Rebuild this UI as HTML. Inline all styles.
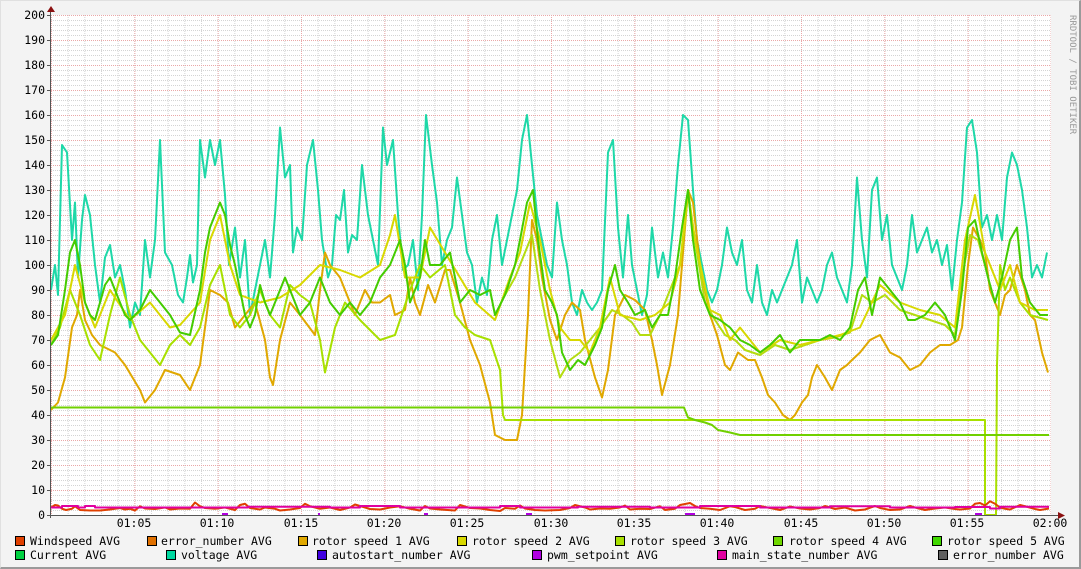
<!DOCTYPE html>
<html><head><meta charset="utf-8"><style>
html,body{margin:0;padding:0;background:#f3f3f3;}
body{width:1081px;height:569px;overflow:hidden;position:relative;font-family:"DejaVu Sans Mono","Liberation Mono",monospace;}
.frame{position:absolute;left:0;top:0;width:1079px;height:567px;border-top:1px solid #e0e0e0;border-left:1px solid #e0e0e0;border-right:2px solid #9a9a9a;border-bottom:2px solid #9a9a9a;box-sizing:border-box;width:1081px;height:569px;}
</style></head><body>
<div class="frame"></div>
<svg width="1081" height="569" style="position:absolute;left:0;top:0" xmlns="http://www.w3.org/2000/svg">
<defs>
<pattern id="mh" x="51" y="15" width="10" height="5" patternUnits="userSpaceOnUse"><line x1="0" y1="0.5" x2="10" y2="0.5" stroke="#d4d4d4" stroke-width="1" stroke-dasharray="1,1"/></pattern>
<pattern id="mv" x="51" y="15" width="16.6667" height="4" patternUnits="userSpaceOnUse"><line x1="0.5" y1="0" x2="0.5" y2="4" stroke="#d4d4d4" stroke-width="1" stroke-dasharray="1,1"/></pattern>
<pattern id="Mh" x="51" y="15" width="10" height="25" patternUnits="userSpaceOnUse"><line x1="0" y1="0.5" x2="10" y2="0.5" stroke="#eaa8a8" stroke-width="1" stroke-dasharray="1,1"/></pattern>
<pattern id="Mv" x="51" y="15" width="83.3333" height="4" patternUnits="userSpaceOnUse"><line x1="0.5" y1="0" x2="0.5" y2="4" stroke="#eaa8a8" stroke-width="1" stroke-dasharray="1,1"/></pattern>
</defs>
<rect x="51" y="15" width="1000" height="500" fill="#fff"/>
<rect x="51" y="15" width="1000" height="500" fill="url(#mh)"/>
<rect x="51" y="15" width="1000" height="500" fill="url(#mv)"/>
<rect x="51" y="15" width="1000" height="500" fill="url(#Mh)"/>
<rect x="51" y="15" width="1000" height="500" fill="url(#Mv)"/>

<g transform="translate(0,515) scale(1,-2.5)" fill="none" stroke-width="2" stroke-linejoin="round">
<polyline vector-effect="non-scaling-stroke" stroke="#1ed8a8" points="51,90 55,100 58,88 62,148 67,145 72,110 75,125 78,95 82,118 85,128 90,120 95,100 100,85 105,103 110,108 115,95 120,100 125,90 130,75 135,85 140,80 145,110 150,95 155,110 160,150 165,105 172,100 178,88 183,85 187,95 190,104 193,93 197,100 200,150 205,135 210,150 215,140 220,150 225,128 229,100 235,115 240,95 245,110 250,80 255,90 260,100 265,110 270,95 275,120 280,155 285,135 290,140 293,105 297,115 302,110 307,140 313,150 318,130 322,110 328,95 332,100 336,120 340,118 344,130 348,105 352,112 357,110 362,140 368,120 373,110 378,100 383,155 387,140 393,150 398,120 403,98 408,100 413,110 418,90 422,120 426,160 432,140 437,125 442,100 447,110 452,115 457,135 462,120 467,105 472,100 477,85 482,95 487,88 492,110 497,120 502,100 507,110 512,120 517,130 522,150 527,160 532,140 537,120 542,110 547,100 552,95 557,125 562,110 567,100 572,85 577,80 582,90 587,85 592,82 597,85 602,90 608,145 613,150 618,115 623,95 628,120 632,100 637,90 642,80 647,88 652,115 658,95 663,105 668,95 673,115 678,140 683,160 688,158 693,130 697,110 702,100 707,90 712,85 717,90 722,100 727,115 732,105 737,100 742,110 747,90 752,85 757,100 762,85 767,80 772,90 777,85 782,90 787,95 792,100 797,110 802,85 807,95 812,90 817,85 822,90 827,100 832,105 837,95 842,90 847,85 852,100 857,135 862,110 867,95 872,130 877,135 882,110 887,120 892,100 897,95 902,90 907,100 912,120 917,105 922,110 927,115 932,105 937,110 942,100 947,108 952,90 957,110 962,125 967,155 972,158 977,145 982,115 987,120 992,110 997,120 1002,110 1007,135 1012,145 1017,140 1022,130 1027,115 1032,95 1037,100 1042,95 1047,105"/>
<polyline vector-effect="non-scaling-stroke" stroke="#e0a800" points="51,42 58,45 65,55 72,75 77,80 80,90 85,78 92,72 100,68 115,65 125,60 140,50 145,45 155,50 165,58 180,56 190,50 200,60 205,75 210,90 220,88 228,85 235,75 245,80 255,85 265,70 270,55 273,52 280,70 290,85 300,80 315,72 320,90 325,105 330,100 340,95 345,90 355,80 365,90 372,85 380,85 390,88 395,80 405,82 410,95 415,85 420,80 428,92 435,85 445,98 450,98 460,85 470,70 480,60 490,45 495,32 505,30 517,30 522,40 528,80 532,118 537,110 542,95 550,78 557,70 565,80 572,85 580,82 585,70 595,55 602,47 608,58 615,80 625,88 635,86 645,82 652,70 657,60 662,48 670,60 678,80 684,110 688,130 693,125 700,100 710,80 717,72 725,60 730,58 738,65 748,62 755,62 762,55 768,48 775,45 783,40 790,38 795,40 802,45 808,48 812,55 817,60 825,55 832,50 840,58 847,60 852,62 860,65 870,70 880,72 890,65 900,63 910,58 920,60 930,65 940,68 950,68 958,70 962,75 968,100 973,115 980,110 985,105 990,90 995,85 1000,80 1005,88 1010,90 1017,100 1025,90 1030,80 1035,78 1042,65 1048,57"/>
<polyline vector-effect="non-scaling-stroke" stroke="#a8e000" points="51,68 60,75 70,90 80,80 90,68 100,62 110,80 120,95 130,80 140,70 150,65 160,60 170,68 180,72 190,68 200,75 210,92 220,100 230,80 240,75 250,80 260,90 270,80 280,75 290,92 300,88 310,85 320,70 325,57 335,75 345,85 360,78 380,70 395,72 410,90 420,100 430,95 445,100 455,80 465,75 475,72 490,70 500,58 503,40 505,38 985,38 985,0 996,0 997,60 1000,100 1005,90 1010,95 1020,85 1030,80 1048,78"/>
<polyline vector-effect="non-scaling-stroke" stroke="#b4dc10" points="505,88 515,95 525,105 532,112 540,90 550,70 560,55 570,62 580,65 590,70 600,75 612,82 622,80 632,77 640,72 650,72 660,80 670,90 680,100 688,128 695,110 705,85 715,78 725,72 735,70 745,66 760,64 775,68 790,66 805,68 820,70 835,71 850,73 862,88 872,85 885,88 900,82 915,80 930,78 945,76 955,72 962,95 970,112 978,110 985,100"/>
<polyline vector-effect="non-scaling-stroke" stroke="#d8d800" points="51,70 65,80 75,100 85,85 95,75 110,90 130,78 150,85 170,75 180,76 200,85 210,110 220,120 230,100 240,88 260,85 280,87 300,92 320,100 340,98 360,95 380,100 390,112 395,120 405,95 420,95 430,115 445,105 460,95 475,85 495,78 510,95 520,105 530,125 540,110 550,90 560,75 570,70 580,70 590,65 600,75 610,95 620,80 640,78 655,80 670,85 680,100 688,130 695,110 710,82 720,80 730,70 740,75 760,65 780,70 800,68 820,70 840,72 860,75 880,92 900,85 920,82 940,80 955,75 965,110 975,128 985,105 1000,90 1010,100 1020,85 1035,82 1048,82"/>
<polyline vector-effect="non-scaling-stroke" stroke="#44cc00" points="51,68 58,72 65,90 70,105 75,110 80,100 85,85 90,80 95,78 100,85 105,92 110,95 115,90 120,85 125,80 130,78 140,82 150,90 160,85 170,80 180,73 190,72 200,90 205,105 210,115 215,120 220,125 225,120 230,108 235,100 240,90 245,80 250,75 255,80 260,92 265,85 270,80 280,90 285,95 290,90 300,80 310,85 320,95 330,85 340,80 350,85 360,80 370,85 380,95 390,100 400,110 405,100 410,85 420,95 425,110 430,100 440,100 450,105 455,95 460,85 470,90 480,88 490,90 495,80 505,88 515,100 520,110 527,125 533,130 538,110 545,90 552,85 557,80 562,65 570,58 578,62 585,60 595,68 602,75 608,90 615,100 620,90 628,85 635,80 645,82 652,75 660,80 668,80 675,95 682,115 688,130 693,110 700,90 705,85 710,80 720,78 730,75 740,70 750,68 760,65 770,68 780,72 790,65 800,70 810,70 820,70 830,72 840,70 850,75 858,90 865,95 872,80 880,95 890,90 900,85 908,78 915,78 925,80 935,85 945,80 955,70 962,90 968,115 975,118 982,105 988,95 995,85 1002,95 1010,110 1017,115 1022,95 1030,85 1040,80 1048,80"/>
<polyline vector-effect="non-scaling-stroke" stroke="#70d000" points="51,43 684,43 688,39 695,38 705,37 712,36 718,34 730,33 740,32 1049,32"/>
<polyline vector-effect="non-scaling-stroke" stroke="#e04000" points="51,3 55,4 58,3.8 62,2.5 66,2 72,2.5 75,3.5 80,2 90,1.8 100,1.8 110,2.2 120,2.8 125,2.2 130,2.5 135,1.8 140,3.5 145,2.6 155,2.4 165,3 170,2.2 180,2.6 190,2.5 195,5 200,3.5 205,2.8 215,2.5 225,3 235,2 240,4 245,4.5 250,2.8 260,2.2 265,3 275,2.5 280,1.8 290,2.2 300,2.8 305,4.5 310,3.5 320,2.5 330,3 340,2 350,3 355,4.2 360,3.6 370,2.4 380,2.2 390,3 400,3.5 410,2.5 420,1.8 425,3.6 430,2.6 440,2.2 455,1.8 460,4 470,2.8 480,2.6 490,2 500,1.6 505,2.8 515,2.5 520,3.8 525,2.6 535,2 545,1.8 560,2 570,2.8 575,4 585,3 590,2.2 600,2.6 610,2.5 620,3 625,3.8 630,2.2 640,2.5 650,2.4 660,3.5 665,2 675,2.5 680,4 690,4.8 695,3.6 700,2.8 710,2.5 720,2 730,3.5 735,3.2 745,2 755,2.5 760,3.6 770,2.8 780,2 790,3.4 800,2.6 810,2.2 820,2.8 825,3.6 835,2.4 845,3 855,1.8 865,2.2 875,3.6 880,2.8 890,2 900,2.2 910,3.6 915,3 925,2 935,2.6 945,3 955,2.4 960,2.2 970,2.6 975,4.5 980,4.8 985,3.8 990,5.5 995,4.5 1000,3 1005,2.5 1010,2.2 1020,4 1025,3.5 1035,2.4 1040,2 1049,2.6"/>
<polyline vector-effect="non-scaling-stroke" stroke="#e000a0" points="51,3 62,3 62,3.6 78,3.6 78,3 85,3 85,3.6 95,3.6 95,3 248,3 248,3.3 330,3.3 330,3 360,3 360,3.6 400,3.6 400,3 500,3 500,3.6 520,3.6 520,3 578,3 578,3.3 650,3.3 650,3 700,3 700,3.6 760,3.6 760,3 830,3 830,3.5 890,3.5 890,3 955,3 955,3.2 990,3.2 990,2.6 1000,2.6 1000,3.3 1049,3.3"/>
<g stroke="#b000e0"><line vector-effect="non-scaling-stroke" x1="222" y1="0.4" x2="228" y2="0.4"/><line vector-effect="non-scaling-stroke" x1="318" y1="0.4" x2="320" y2="0.4"/><line vector-effect="non-scaling-stroke" x1="424" y1="0.4" x2="428" y2="0.4"/><line vector-effect="non-scaling-stroke" x1="526" y1="0.4" x2="532" y2="0.4"/><line vector-effect="non-scaling-stroke" x1="685" y1="0.4" x2="695" y2="0.4"/><line vector-effect="non-scaling-stroke" x1="975" y1="0.4" x2="982" y2="0.4"/></g>
</g>

<line x1="50.5" y1="10" x2="50.5" y2="518" stroke="#555" stroke-width="1"/>
<line x1="47" y1="515.5" x2="1060" y2="515.5" stroke="#555" stroke-width="1"/>
<polygon points="47,12 51,6 55,12" fill="#8b1010"/>
<polygon points="1058,512 1065,515.5 1058,519" fill="#8b1010"/>
<g stroke="#555"><line x1="47" y1="15.5" x2="51" y2="15.5"/><line x1="47" y1="40.5" x2="51" y2="40.5"/><line x1="47" y1="65.5" x2="51" y2="65.5"/><line x1="47" y1="90.5" x2="51" y2="90.5"/><line x1="47" y1="115.5" x2="51" y2="115.5"/><line x1="47" y1="140.5" x2="51" y2="140.5"/><line x1="47" y1="165.5" x2="51" y2="165.5"/><line x1="47" y1="190.5" x2="51" y2="190.5"/><line x1="47" y1="215.5" x2="51" y2="215.5"/><line x1="47" y1="240.5" x2="51" y2="240.5"/><line x1="47" y1="265.5" x2="51" y2="265.5"/><line x1="47" y1="290.5" x2="51" y2="290.5"/><line x1="47" y1="315.5" x2="51" y2="315.5"/><line x1="47" y1="340.5" x2="51" y2="340.5"/><line x1="47" y1="365.5" x2="51" y2="365.5"/><line x1="47" y1="390.5" x2="51" y2="390.5"/><line x1="47" y1="415.5" x2="51" y2="415.5"/><line x1="47" y1="440.5" x2="51" y2="440.5"/><line x1="47" y1="465.5" x2="51" y2="465.5"/><line x1="47" y1="490.5" x2="51" y2="490.5"/></g>

<g font-family="DejaVu Sans Mono, Liberation Mono, monospace" font-size="11.5" fill="#000" text-anchor="end">
<text x="45" y="19">200</text><text x="45" y="44">190</text><text x="45" y="69">180</text><text x="45" y="94">170</text><text x="45" y="119">160</text><text x="45" y="144">150</text><text x="45" y="169">140</text><text x="45" y="194">130</text><text x="45" y="219">120</text><text x="45" y="244">110</text><text x="45" y="269">100</text><text x="45" y="294">90</text><text x="45" y="319">80</text><text x="45" y="344">70</text><text x="45" y="369">60</text><text x="45" y="394">50</text><text x="45" y="419">40</text><text x="45" y="444">30</text><text x="45" y="469">20</text><text x="45" y="494">10</text><text x="45" y="519">0</text>
</g>
<g font-family="DejaVu Sans Mono, Liberation Mono, monospace" font-size="11.5" fill="#000" text-anchor="middle">
<text x="134" y="527">01:05</text><text x="217" y="527">01:10</text><text x="301" y="527">01:15</text><text x="384" y="527">01:20</text><text x="467" y="527">01:25</text><text x="551" y="527">01:30</text><text x="634" y="527">01:35</text><text x="717" y="527">01:40</text><text x="801" y="527">01:45</text><text x="884" y="527">01:50</text><text x="967" y="527">01:55</text><text x="1050" y="527">02:00</text>
</g>
<text transform="translate(1070,15) rotate(90)" font-family="DejaVu Sans Mono, monospace" font-size="9" fill="#999">RRDTOOL / TOBI OETIKER</text>

<g stroke="#000" stroke-width="1">
<rect x="15.5" y="536.5" width="9" height="9" fill="#e04000"/>
<rect x="147.5" y="536.5" width="9" height="9" fill="#e07000"/>
<rect x="298.5" y="536.5" width="9" height="9" fill="#e0a800"/>
<rect x="457.5" y="536.5" width="9" height="9" fill="#d8d800"/>
<rect x="615.5" y="536.5" width="9" height="9" fill="#a8e000"/>
<rect x="773.5" y="536.5" width="9" height="9" fill="#70d800"/>
<rect x="932.5" y="536.5" width="9" height="9" fill="#40d800"/>
<rect x="15.5" y="550.5" width="9" height="9" fill="#00d040"/>
<rect x="166.5" y="550.5" width="9" height="9" fill="#00d8a0"/>
<rect x="317.5" y="550.5" width="9" height="9" fill="#4000e0"/>
<rect x="532.5" y="550.5" width="9" height="9" fill="#b000e0"/>
<rect x="717.5" y="550.5" width="9" height="9" fill="#e000a0"/>
<rect x="938.5" y="550.5" width="9" height="9" fill="#606060"/>
</g>
<g font-family="DejaVu Sans Mono, Liberation Mono, monospace" font-size="11.5" fill="#000" xml:space="preserve">
<text x="30" y="545">Windspeed AVG</text>
<text x="161" y="545">error_number AVG</text>
<text x="312" y="545">rotor speed 1 AVG</text>
<text x="472" y="545">rotor speed 2 AVG</text>
<text x="630" y="545">rotor speed 3 AVG</text>
<text x="789" y="545">rotor speed 4 AVG</text>
<text x="947" y="545">rotor speed 5 AVG</text>
<text x="30" y="559">Current AVG</text>
<text x="181" y="559">voltage AVG</text>
<text x="332" y="559">autostart_number AVG</text>
<text x="547" y="559">pwm_setpoint AVG</text>
<text x="732" y="559">main_state_number AVG</text>
<text x="953" y="559">error_number AVG</text>
</g>
</svg>
</body></html>
